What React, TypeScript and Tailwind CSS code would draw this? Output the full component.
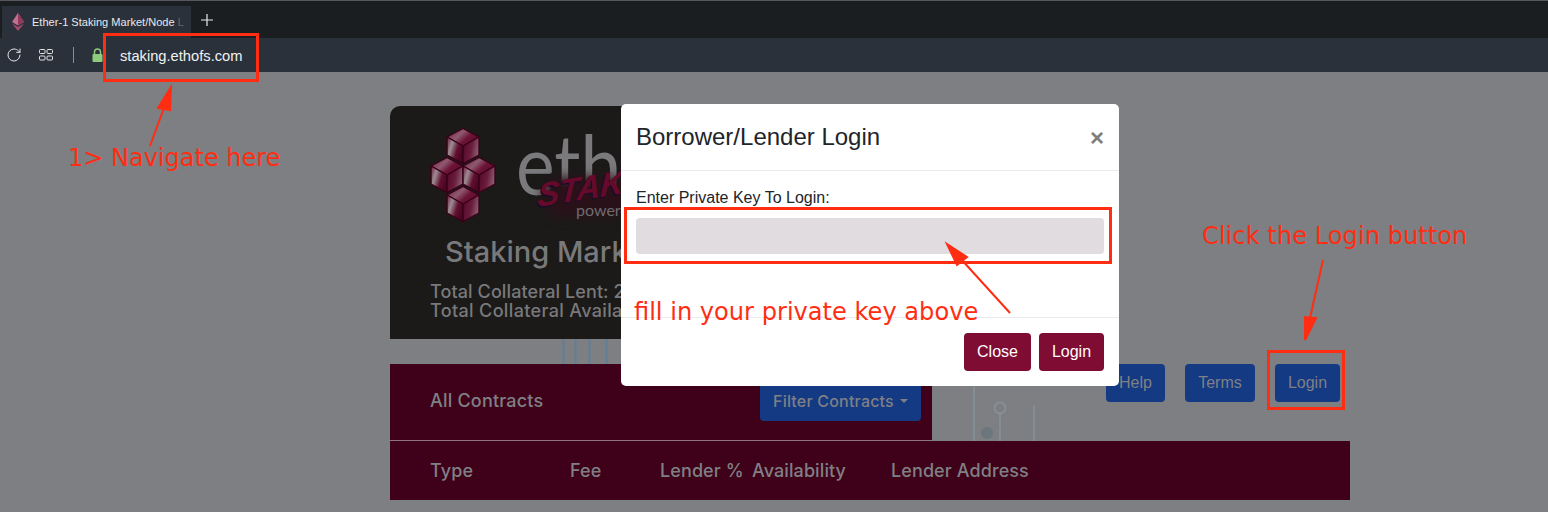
import React from 'react';
import { RotateCw } from 'lucide-react';

const Cube: React.FC<{ x: number; y: number }> = ({ x, y }) => (
  <g transform={`translate(${x} ${y})`} stroke="#3a0018" strokeWidth="1.4" strokeLinejoin="round">
    <path d="M0 -17.5 L16 -9 L0 0 L-16 -9 Z" fill="url(#cubeTop)" />
    <path d="M-16 -9 L0 0 L0 17.5 L-16 9 Z" fill="url(#cubeLeft)" />
    <path d="M16 -9 L0 0 L0 17.5 L16 9 Z" fill="url(#cubeRight)" />
  </g>
);

const CubeLogo = () => (
  <svg width="70" height="96" viewBox="0 0 70 96" className="shrink-0">
    <defs>
      <linearGradient id="cubeTop" x1="0" y1="0" x2="1" y2="0.6">
        <stop offset="0" stopColor="#701638" />
        <stop offset="0.45" stopColor="#8d5a70" />
        <stop offset="0.7" stopColor="#6d1436" />
        <stop offset="1" stopColor="#5c0a2b" />
      </linearGradient>
      <linearGradient id="cubeLeft" x1="0" y1="0" x2="1" y2="0.5">
        <stop offset="0" stopColor="#6d1436" />
        <stop offset="0.35" stopColor="#9c8e94" />
        <stop offset="0.7" stopColor="#61102f" />
        <stop offset="1" stopColor="#4d0524" />
      </linearGradient>
      <linearGradient id="cubeRight" x1="0" y1="0" x2="1" y2="0.3">
        <stop offset="0" stopColor="#500625" />
        <stop offset="0.6" stopColor="#6b1c3c" />
        <stop offset="1" stopColor="#855c6e" />
      </linearGradient>
    </defs>
    <Cube x={33} y={19} />
    <Cube x={17} y={48} />
    <Cube x={49} y={48} />
    <Cube x={33} y={77} />
  </svg>
);

const NavButton: React.FC<{ label: string; className: string }> = ({ label, className }) => (
  <button className={`h-[38px] rounded bg-[#143a84] font-['Liberation_Sans',sans-serif] text-[16px] text-[#7f8084] ${className}`}>{label}</button>
);

const App: React.FC = () => {
  const columns = [
    { label: 'Type', width: 'w-[140px]' },
    { label: 'Fee', width: 'w-[90px]' },
    { label: 'Lender %', width: 'w-[92px]' },
    { label: 'Availability', width: 'w-[139px]' },
    { label: 'Lender Address', width: 'w-[200px]' },
  ];

  return (
    <div className="relative h-[512px] w-[1548px] overflow-hidden bg-[#7e7f83] font-['Liberation_Sans',sans-serif]">
      {/* browser chrome */}
      <div className="h-[72px] border-t border-[#55585c]">
        <div className="flex h-[37px] bg-[#1b1e21] pl-[2px]">
          <div className="mt-[5px] flex w-[189px] items-center gap-[8px] overflow-hidden bg-[#2b313b] pl-[10px]">
            <svg width="12" height="18" viewBox="0 0 12 18" className="shrink-0">
              <path d="M6 0 L12 9 L6 12.5 L0 9 Z" fill="#c2708e" />
              <path d="M6 0 L12 9 L6 12.5 Z" fill="#8f3a5c" />
              <path d="M0 10.5 L6 14 L12 10.5 L6 18 Z" fill="#a8496f" />
            </svg>
            <span className="whitespace-nowrap text-[11px] font-medium tracking-[0.03px] text-[#e8e9ea]">
              Ether-1 Staking Market/Node <span className="opacity-30">L</span>
            </span>
          </div>
          <svg width="14" height="14" viewBox="0 0 14 14" className="ml-[9px] mt-[12px]">
            <path d="M7 1 V13 M1 7 H13" stroke="#e8e9ea" strokeWidth="1.2" />
          </svg>
        </div>
        <div className="flex h-[34px] items-center bg-[#2b313b] pl-[6px]">
          <RotateCw size={16} strokeWidth={1.5} color="#e3e5e7" />
          <svg width="14" height="12" viewBox="0 0 14 12" className="ml-[17px]">
            <g fill="none" stroke="#e3e5e7" strokeWidth="1">
              <rect x="0.5" y="0.5" width="5.5" height="4" rx="1" />
              <rect x="8" y="0.5" width="5.5" height="4" rx="1" />
              <rect x="0.5" y="7" width="5.5" height="4" rx="1" />
              <rect x="8" y="7" width="5.5" height="4" rx="1" />
            </g>
          </svg>
          <div className="ml-[20px] h-[16px] w-px bg-[#8a8e94]" />
          <svg width="11" height="14" viewBox="0 0 11 14" className="ml-[18px]">
            <path d="M2.5 6 V4 a3 3 0 0 1 6 0 V6" fill="none" stroke="#8ecb7c" strokeWidth="1.4" />
            <rect x="0.5" y="6" width="10" height="8" rx="1" fill="#8ecb7c" />
          </svg>
          <span className="ml-[17px] mt-[2px] text-[14.7px] font-medium text-[#f0f1f2]">staking.ethofs.com</span>
        </div>
      </div>

      {/* page behind the modal */}
      <div className="ml-[390px] mt-[34px] w-[960px] font-['Inter',sans-serif]">
        <div className="h-[233px] w-[542px] overflow-hidden rounded-tl-[10px] bg-[#1b1a19] pl-[40px] pt-[21px]">
          <div className="w-[191px] overflow-hidden">
            <div className="flex items-start">
              <CubeLogo />
              <div className="relative ml-[16px] h-[96px] flex-1">
                <span className="absolute -top-[6px] left-0 origin-left scale-x-[0.87] font-['Lato',sans-serif] text-[84px] font-normal leading-[84px] text-[#7a7a7c]">ethe</span>
                <div className="absolute left-[26px] top-[50px] h-[40px] w-[90px] rounded-full bg-[#2a1119] blur-[6px]" />
                <span className="absolute left-[21px] top-[42px] -rotate-[9deg] -skew-x-12 font-['Liberation_Sans',sans-serif] text-[33px] font-bold italic leading-[40px] text-[#650a2b] [text-shadow:-1px_1px_0_#170c28]">STAK</span>
                <span className="absolute left-[60px] top-[71px] whitespace-nowrap font-['Lato',sans-serif] text-[16px] text-[#6d6d6f]">powere</span>
              </div>
            </div>
            <div className="ml-[15px] mt-[11px] whitespace-nowrap text-[29px] font-medium leading-[36px] text-[#79797b]">Staking Mark</div>
            <div className="mt-[12px] whitespace-nowrap text-[18px] font-medium leading-[19px] text-[#79797b]">
              <div className="tracking-[0.1px]">Total Collateral Lent: 2</div>
              <div className="tracking-[0.35px]">Total Collateral Availa</div>
            </div>
          </div>
        </div>

        <div className="mt-[25px] flex">
          <div className="flex h-[77px] w-[542px] items-start justify-between border-b border-[#8c7480] bg-[#3f001a] pl-[40px] pr-[11px]">
            <span className="mt-[25px] text-[18px] font-medium leading-[24px] tracking-[0.2px] text-[#7f8084]">All Contracts</span>
            <button className="mt-[18px] flex h-[39px] w-[161px] items-center justify-center gap-[6px] rounded bg-[#143a84] pb-[2px] text-[16px] font-medium tracking-[0.2px] text-[#7f8084]">
              Filter Contracts
              <span className="mt-[1px] border-x-[4px] border-t-[4px] border-x-transparent border-t-[#7f8084]" />
            </button>
          </div>
          <div className="flex flex-1 items-start justify-end gap-[20px] pr-[10px]">
            <NavButton label="Help" className="w-[59px]" />
            <NavButton label="Terms" className="w-[70px]" />
            <NavButton label="Login" className="w-[65px]" />
          </div>
        </div>

        <div className="flex h-[59px] items-center bg-[#3f001a] pl-[40px]">
          {columns.map(col => (
            <span key={col.label} className={`${col.width} shrink-0 whitespace-nowrap text-[18px] font-medium tracking-[0.1px] text-[#7f8084]`}>
              {col.label}
            </span>
          ))}
        </div>
      </div>

      {/* faint circuit lines behind the page */}
      <svg className="absolute left-[555px] top-[339px]" width="490" height="102" viewBox="0 0 490 102" fill="none">
        <path d="M8.5 0 V25 M20.5 0 V25 M34.5 0 V25 M51.5 0 V25" stroke="#5f7f96" strokeWidth="2" />
        <path d="M419 47 V102 M445 75 V102 M479 67 V102" stroke="#88929a" strokeWidth="1.5" />
        <circle cx="445" cy="69" r="5.5" stroke="#8b9396" strokeWidth="1.5" />
        <circle cx="432" cy="94" r="6" fill="#6b767d" />
      </svg>

      {/* modal */}
      <div className="absolute left-[621px] top-[104px] flex h-[282px] w-[498px] flex-col rounded-[5px] bg-white">
        <div className="flex h-[67px] items-center justify-between border-b border-[#e9ecef] px-[15px]">
          <h5 className="text-[24px] leading-[30px] text-[#212529]">Borrower/Lender Login</h5>
          <span className="mt-[2px] text-[24px] font-bold leading-none text-[#7e7e7e]">×</span>
        </div>
        <div className="h-[147px] border-b border-[#e9ecef] px-[15px] pt-[18px]">
          <div className="text-[16px] leading-[18px] text-[#212529]">Enter Private Key To Login:</div>
          <div className="mt-[11px] h-[36px] rounded bg-[#e0dce0]" />
        </div>
        <div className="flex flex-1 items-start justify-end gap-[8px] px-[15px] pt-[15px]">
          <button className="h-[38px] w-[67px] rounded bg-[#7f0c32] text-[16px] text-white">Close</button>
          <button className="h-[38px] w-[65px] rounded bg-[#7f0c32] text-[16px] text-white">Login</button>
        </div>
      </div>

      {/* red annotations drawn over the screenshot */}
      <div className="absolute left-[103px] top-[33px] h-[49px] w-[156px] border-[3px] border-[#ff2d12]" />
      <div className="absolute left-[624px] top-[207px] h-[57px] w-[488px] border-[3px] border-[#ff2d12]" />
      <div className="absolute left-[1267px] top-[350px] h-[60px] w-[78px] border-[3px] border-[#ff2d12]" />
      <svg className="absolute left-0 top-0" width="1548" height="512" viewBox="0 0 1548 512">
        <g stroke="#ff2d12" strokeWidth="2" fill="#ff2d12">
          <path d="M150 146 L164 108" />
          <path d="M171 87 L170 110 L158 108 Z" />
          <path d="M1010 313 L960 258" />
          <path d="M947 244 L967 257 L957 265 Z" />
          <path d="M1323 260 L1310 318" />
          <path d="M1305 340 L1305 317 L1316 318 Z" />
        </g>
      </svg>
      <span className="absolute left-[68px] top-[143px] font-['DejaVu_Sans',sans-serif] text-[24px] leading-[30px] text-[#ff2d12]">1&gt; Navigate here</span>
      <span className="absolute left-[634px] top-[297px] font-['DejaVu_Sans',sans-serif] text-[24.1px] leading-[30px] text-[#ff2d12]">fill in your private key above</span>
      <span className="absolute left-[1202px] top-[221px] font-['DejaVu_Sans',sans-serif] text-[24.2px] leading-[30px] text-[#ff2d12]">Click the Login button</span>
    </div>
  );
};

export default App;
